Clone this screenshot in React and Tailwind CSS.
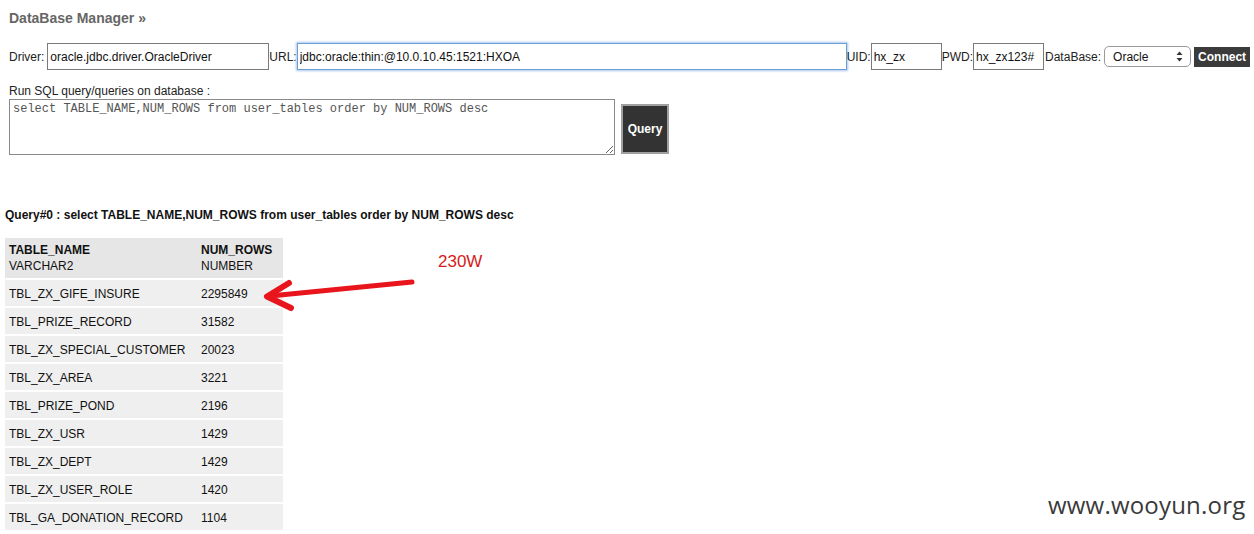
import React from 'react';

const rows = [
    ['TBL_ZX_GIFE_INSURE', '2295849'],
    ['TBL_PRIZE_RECORD', '31582'],
    ['TBL_ZX_SPECIAL_CUSTOMER', '20023'],
    ['TBL_ZX_AREA', '3221'],
    ['TBL_PRIZE_POND', '2196'],
    ['TBL_ZX_USR', '1429'],
    ['TBL_ZX_DEPT', '1429'],
    ['TBL_ZX_USER_ROLE', '1420'],
    ['TBL_GA_DONATION_RECORD', '1104'],
];

const sql = 'select TABLE_NAME,NUM_ROWS from user_tables order by NUM_ROWS desc';

const App = () => {
    return (
        <div className="relative w-[1254px] h-[534px] overflow-hidden bg-white font-['Liberation_Sans',Arial,sans-serif] text-[12px] leading-[14px] text-[#222]">
            <div className="pl-[9px] pt-[10px]">
                <h1 className="text-[14px] leading-[16px] font-bold text-[#666]">DataBase Manager »</h1>

                {/* Connection form */}
                <div className="mt-[17px] flex items-center h-[27px]">
                    <span className="mr-[3px]">Driver:</span>
                    <input
                        defaultValue="oracle.jdbc.driver.OracleDriver"
                        className="w-[222px] h-[27px] border border-[#7a7a7a] pl-[2px] text-[12px] text-[#111] outline-none"
                    />
                    <span>URL:</span>
                    <input
                        defaultValue="jdbc:oracle:thin:@10.0.10.45:1521:HXOA"
                        className="w-[550px] h-[27px] border border-[#6d9fd6] shadow-[0_0_2px_1px_#a9c8ec] pl-[2px] text-[12px] text-[#111] outline-none"
                    />
                    <span>UID:</span>
                    <input
                        defaultValue="hx_zx"
                        className="w-[71px] h-[27px] border border-[#7a7a7a] pl-[2px] text-[12px] text-[#111] outline-none"
                    />
                    <span>PWD:</span>
                    <input
                        defaultValue="hx_zx123#"
                        className="w-[71px] h-[27px] border border-[#7a7a7a] pl-[2px] text-[12px] text-[#111] outline-none"
                    />
                    <span className="ml-[1px] mr-[3px]">DataBase:</span>
                    <div className="w-[87px] h-[21px] rounded-[5px] border border-[#9a9a9a] flex items-center justify-between pl-[8px] pr-[7px] text-[#111]">
                        <span>Oracle</span>
                        <svg width="7" height="11" viewBox="0 0 7 11">
                            <path d="M3.5 0.5 L6.5 4 L0.5 4 Z" fill="#333" />
                            <path d="M3.5 10.5 L6.5 7 L0.5 7 Z" fill="#333" />
                        </svg>
                    </div>
                    <button className="ml-[3px] w-[56px] h-[20px] bg-[#3b3b3b] text-white font-bold text-[12px] leading-[20px]">
                        Connect
                    </button>
                </div>

                {/* SQL box */}
                <div className="mt-[14px]">Run SQL query/queries on database :</div>
                <div className="mt-[1px] flex items-start">
                    <textarea
                        defaultValue={sql}
                        className="w-[606px] h-[56px] border border-[#8a8a8a] px-[3px] py-[2px] font-['Liberation_Mono','Courier_New',monospace] text-[12px] leading-[14px] text-[#555] outline-none resize-y"
                    />
                    <button className="ml-[6px] mt-[5px] w-[48px] h-[50px] bg-[#333] border-2 border-[#a0a0a0] text-white font-bold text-[12px]">
                        Query
                    </button>
                </div>

                <div className="mt-[53px] -ml-[4px] font-bold text-[#111]">Query#0 : {sql}</div>

                {/* Results */}
                <div className="mt-[16px] -ml-[4px] w-[278px] flex flex-col gap-[2px] text-[#111]">
                    <div className="flex h-[40px] bg-[#e6e6e6] pt-[4px]">
                        <div className="w-[192px] pl-[4px] leading-[16px]">
                            <div className="font-bold">TABLE_NAME</div>
                            <div>VARCHAR2</div>
                        </div>
                        <div className="pl-[4px] leading-[16px]">
                            <div className="font-bold">NUM_ROWS</div>
                            <div>NUMBER</div>
                        </div>
                    </div>
                    {rows.map(([name, n]) => (
                        <div key={name} className="flex items-center h-[26px] pt-[2px] bg-[#efefef]">
                            <div className="w-[192px] pl-[4px]">{name}</div>
                            <div className="pl-[4px]">{n}</div>
                        </div>
                    ))}
                </div>
            </div>

            {/* Annotation */}
            <div className="absolute left-[438px] top-[252px] text-[17px] leading-[20px] text-[#d41a20]">230W</div>
            <svg className="absolute left-0 top-0" width="1254" height="534" viewBox="0 0 1254 534">
                <g fill="none" stroke="#e8161c" strokeLinecap="round" strokeLinejoin="round">
                    <path d="M412 282 L270 296" strokeWidth="5" />
                    <path d="M289 283 L267 296.5 L291 308" strokeWidth="6" />
                </g>
            </svg>

            {/* Watermark */}
            <div className="absolute left-[1048px] top-[490px] font-['Open_Sans',sans-serif] text-[24px] leading-[30px] tracking-[0.2px] text-[#3a3a3a]">
                www.wooyun.org
            </div>
        </div>
    );
};

export default App;
